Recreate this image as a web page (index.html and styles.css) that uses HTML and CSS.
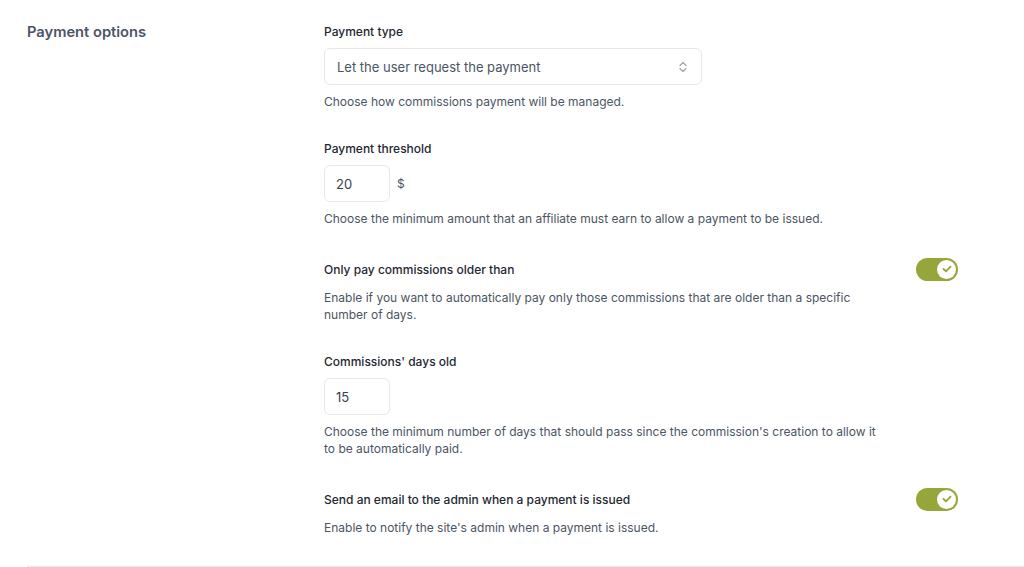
FILE: index.html
```html
<!DOCTYPE html>
<html lang="en">
 <head>
	<title>payment options</title>
	<meta charset="utf-8"/>
	<link rel="stylesheet" href="styles.css">
 </head>

 <body>
	<div id="wrap">
		<div class="section">
			<h3 class="secTitle">Payment options</h3>

			<div class="fields">
				<!-- payment type -->
				<div class="field">
					<label class="label">Payment type</label>
					<div class="select">
						<span>Let the user request the payment</span>
						<svg width="10" height="14" viewBox="0 0 10 14">
							<path d="M2 5.5 L5 2.5 L8 5.5" fill="none" stroke="#9ca3af" stroke-width="1.2" stroke-linecap="round" stroke-linejoin="round"/>
							<path d="M2 8.5 L5 11.5 L8 8.5" fill="none" stroke="#9ca3af" stroke-width="1.2" stroke-linecap="round" stroke-linejoin="round"/>
						</svg>
					</div>
					<p class="help">Choose how commissions payment will be managed.</p>
				</div>

				<!-- threshold -->
				<div class="field">
					<label class="label">Payment threshold</label>
					<div class="inline">
						<div class="input">20</div>
						<span class="unit">$</span>
					</div>
					<p class="help">Choose the minimum amount that an affiliate must earn to allow a payment to be issued.</p>
				</div>

				<!-- older than -->
				<div class="field">
					<div class="row">
						<label class="label">Only pay commissions older than</label>
						<span class="toggle"><span class="knob"><svg width="10" height="8" viewBox="0 0 10 8"><path d="M1.5 4 L4 6.3 L8.5 1.7" fill="none" stroke="#97a63b" stroke-width="1.9" stroke-linecap="round" stroke-linejoin="round"/></svg></span></span>
					</div>
					<p class="help">Enable if you want to automatically pay only those commissions that are older than a specific number of days.</p>
				</div>

				<!-- days old -->
				<div class="field">
					<label class="label">Commissions' days old</label>
					<div class="inline">
						<div class="input">15</div>
					</div>
					<p class="help">Choose the minimum number of days that should pass since the commission's creation to allow it to be automatically paid.</p>
				</div>

				<!-- email -->
				<div class="field">
					<div class="row">
						<label class="label">Send an email to the admin when a payment is issued</label>
						<span class="toggle"><span class="knob"><svg width="10" height="8" viewBox="0 0 10 8"><path d="M1.5 4 L4 6.3 L8.5 1.7" fill="none" stroke="#97a63b" stroke-width="1.9" stroke-linecap="round" stroke-linejoin="round"/></svg></span></span>
					</div>
					<p class="help">Enable to notify the site's admin when a payment is issued.</p>
				</div>
			</div>
		</div>
	</div>
 </body>
</html>
```

FILE: styles.css
```css
*{margin:0; padding:0; box-sizing:border-box;}
body{background:#fff; font-family:Inter, "Liberation Sans", sans-serif; font-size:12px; color:#4b5563;}

/*###### wrap ######*/
	#wrap{width:100%; padding-left:27px;}

/*###### section (title + fields) ######*/
	.section{display:flex; padding:23px 0 30px; border-bottom:1px solid #e6e8eb;}
	.secTitle{width:297px; flex-shrink:0; font-size:14.7px; font-weight:600; line-height:18px; color:#4b5567;}

/*###### fields ######*/
	.fields{width:634px; display:flex; flex-direction:column; gap:30px;}
	.field{display:flex; flex-direction:column;}
	.label{display:block; font-size:12px; font-weight:500; line-height:17px; color:#1f2733;}
	.help{max-width:564px; margin-top:8px; line-height:17px; color:#4b5563;}

/* select */
	.select{width:378px; height:37px; margin-top:8px; padding:0 13px 0 12px; display:flex; align-items:center; justify-content:space-between; border:1px solid #e5e7eb; border-radius:6px; color:#4b5563; font-size:13px;}

/* input + unit */
	.inline{display:flex; align-items:center; margin-top:8px;}
	.input{width:66px; height:37px; padding-left:11px; display:flex; align-items:center; border:1px solid #e5e7eb; border-radius:6px; color:#374151; font-size:13px;}
	.unit{margin-left:7px; color:#4b5563;}

/* toggle row */
	.row{display:flex; align-items:center; justify-content:space-between; height:24px;}
	.toggle{width:42px; height:23px; border-radius:12px; background:#97a63b; display:flex; align-items:center; justify-content:flex-end; padding-right:2px;}
	.knob{width:19px; height:19px; border-radius:50%; background:#fff; display:flex; align-items:center; justify-content:center;}
```
